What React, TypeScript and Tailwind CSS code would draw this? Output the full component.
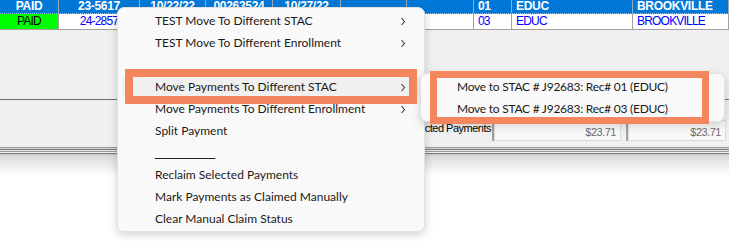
import React from "react";

const cols = [59, 81, 66, 67, 68, 66, 67, 38, 121, 96];

const row1 = [
  { t: "PAID", a: "center" },
  { t: "23-5617", a: "center" },
  { t: "10/22/22", a: "center" },
  { t: "00263524", a: "center" },
  { t: "10/27/22", a: "center" },
  { t: "", a: "center" },
  { t: "", a: "center" },
  { t: "01", a: "left" },
  { t: "EDUC", a: "left" },
  { t: "BROOKVILLE", a: "left" },
];
const row2 = [
  { t: "PAID", a: "center" },
  { t: "24-2857", a: "center" },
  { t: "10/22/22", a: "center" },
  { t: "00263525", a: "center" },
  { t: "10/27/22", a: "center" },
  { t: "", a: "center" },
  { t: "", a: "center" },
  { t: "03", a: "left" },
  { t: "EDUC", a: "left" },
  { t: "BROOKVILLE", a: "left" },
];

const Chevron = () => (
  <svg width="6" height="9" viewBox="0 0 6 9" className="shrink-0">
    <path d="M1.5 1 L4.5 4.5 L1.5 8" fill="none" stroke="#3a3a3a" strokeWidth="1.1" />
  </svg>
);

const menuItems: { t: string; sub?: boolean; hover?: boolean; line?: boolean }[] = [
  { t: "TEST Move To Different STAC", sub: true },
  { t: "TEST Move To Different Enrollment", sub: true },
  { t: "" },
  { t: "Move Payments To Different STAC", sub: true, hover: true },
  { t: "Move Payments To Different Enrollment", sub: true },
  { t: "Split Payment" },
  { t: "_________", line: true },
  { t: "Reclaim Selected Payments" },
  { t: "Mark Payments as Claimed Manually" },
  { t: "Clear Manual Claim Status" },
];

export default function App() {
  return (
    <div
      className="relative w-[729px] h-[241px] overflow-hidden bg-white"
      style={{ fontFamily: "'Liberation Sans', Arial, sans-serif" }}
    >
      {/* grid row 1 */}
      <div className="flex h-[14px] bg-[#0078d7] border-b border-dotted border-[#9cc3e8]">
        {row1.map((c, i) => (
          <div
            key={i}
            style={{ width: cols[i] }}
            className={`shrink-0 h-[13px] border-r border-[#9aa9b8] text-white font-bold text-[12px] leading-[13px] tracking-[-0.3px] overflow-hidden whitespace-nowrap ${
              c.a === "center" ? "text-center" : "text-left pl-[4px]"
            }`}
          >
            {c.t}
          </div>
        ))}
      </div>
      {/* grid row 2 */}
      <div className="flex h-[16px] border-b border-[#a0a0a0]">
        {row2.map((c, i) => (
          <div
            key={i}
            style={{ width: cols[i] }}
            className={`shrink-0 h-[15px] border-r border-[#a0a0a0] text-[12px] leading-[15px] tracking-[-0.8px] overflow-hidden whitespace-nowrap ${
              i === 0 ? "bg-[#00ff00] text-black" : "bg-white text-[#0000ff]"
            } ${c.a === "center" ? "text-center" : "text-left pl-[4px]"}`}
          >
            {c.t}
          </div>
        ))}
      </div>
      {/* gray area */}
      <div className="flex flex-col h-[117px] bg-[#f0f0f0]">
        <div className="h-[69px]" />
        <div className="h-[1px] bg-[#6e6e6e]" />
        <div className="h-[20px]" />
        <div className="flex h-[21px] items-stretch">
          <div className="w-[492px] shrink-0 text-right pr-[1px] text-[11px] leading-[17px] tracking-[-0.5px] text-black whitespace-nowrap">
            Selected Payments
          </div>
          <div className="w-[2px] bg-[#a0a0a0]" />
          <div className="w-[127px] shrink-0 bg-[#f8f8f8] border border-[#dcdcdc] text-right pr-[4px] text-[11px] leading-[23px] tracking-[-0.5px] text-[#6d6d6d]">
            $23.71
          </div>
          <div className="w-[5px]" />
          <div className="w-[2px] bg-[#a0a0a0]" />
          <div className="w-[98px] shrink-0 bg-[#f8f8f8] border border-[#dcdcdc] text-right pr-[4px] text-[11px] leading-[23px] tracking-[-0.5px] text-[#6d6d6d]">
            $23.71
          </div>
        </div>
        <div className="h-[6px]" />
      </div>
      {/* triple lines */}
      <div className="h-[1px] bg-[#9a9a9a]" />
      <div className="h-[1px] bg-[#d4d4d4]" />
      <div className="h-[1px] bg-[#7a7a7a]" />
      <div className="h-[1px] bg-[#e6e6e6]" />
      <div className="h-[1px] bg-[#9a9a9a]" />
      <div className="h-[1px] bg-[#efefef]" />
      <div className="h-[1px] bg-[#7a7a7a]" />
      <div className="h-[1px] bg-[#c8c8c8]" />
      <div className="h-[20px] bg-gradient-to-b from-[#d9d9d9] to-white" />

      {/* context menu */}
      <div
        className="absolute left-[117px] top-[7px] w-[308px] h-[225px] bg-[#f9f9f9] border border-[#e2e2e2] rounded-[7px] shadow-[0_3px_10px_rgba(0,0,0,0.18)] pt-[2px] pb-[2px] flex flex-col"
        style={{ fontFamily: "Lato, 'Noto Sans', sans-serif" }}
      >
        {menuItems.map((m, i) => (
          <div
            key={i}
            className={`h-[22px] shrink-0 mx-[4px] rounded-[4px] flex items-center pl-[33px] pr-[14px] text-[12px] text-[#1a1a1a] ${
              m.hover ? "bg-[#f0f0f0]" : ""
            }`}
          >
            {m.line ? (
              <span
                className="flex-1 whitespace-nowrap text-black text-[12px] leading-[12px] mt-[-2px]"
                style={{ fontFamily: "'Liberation Sans', Arial, sans-serif" }}
              >
                {m.t}
              </span>
            ) : (
              <span className="flex-1 whitespace-nowrap">{m.t}</span>
            )}
            {m.sub && <Chevron />}
          </div>
        ))}
      </div>

      {/* submenu */}
      <div
        className="absolute left-[420px] top-[73px] w-[305px] h-[49px] bg-[#f9f9f9] border border-[#e2e2e2] rounded-[7px] shadow-[0_3px_10px_rgba(0,0,0,0.18)] pt-[2px] flex flex-col"
        style={{ fontFamily: "Lato, 'Noto Sans', sans-serif" }}
      >
        {["Move to STAC # J92683: Rec# 01 (EDUC)", "Move to STAC # J92683: Rec# 03 (EDUC)"].map((t) => (
          <div key={t} className="h-[22px] shrink-0 mx-[4px] flex items-center pl-[32px] text-[12px] tracking-[-0.25px] text-[#1a1a1a] whitespace-nowrap">
            {t}
          </div>
        ))}
      </div>

      {/* orange annotation boxes */}
      <div className="absolute left-[125px] top-[69px] w-[292px] h-[35px] border-[8px] border-[#f4865f]" />
      <div className="absolute left-[430px] top-[71px] w-[279px] h-[53px] border-[7px] border-[#f4865f]" />
    </div>
  );
}
